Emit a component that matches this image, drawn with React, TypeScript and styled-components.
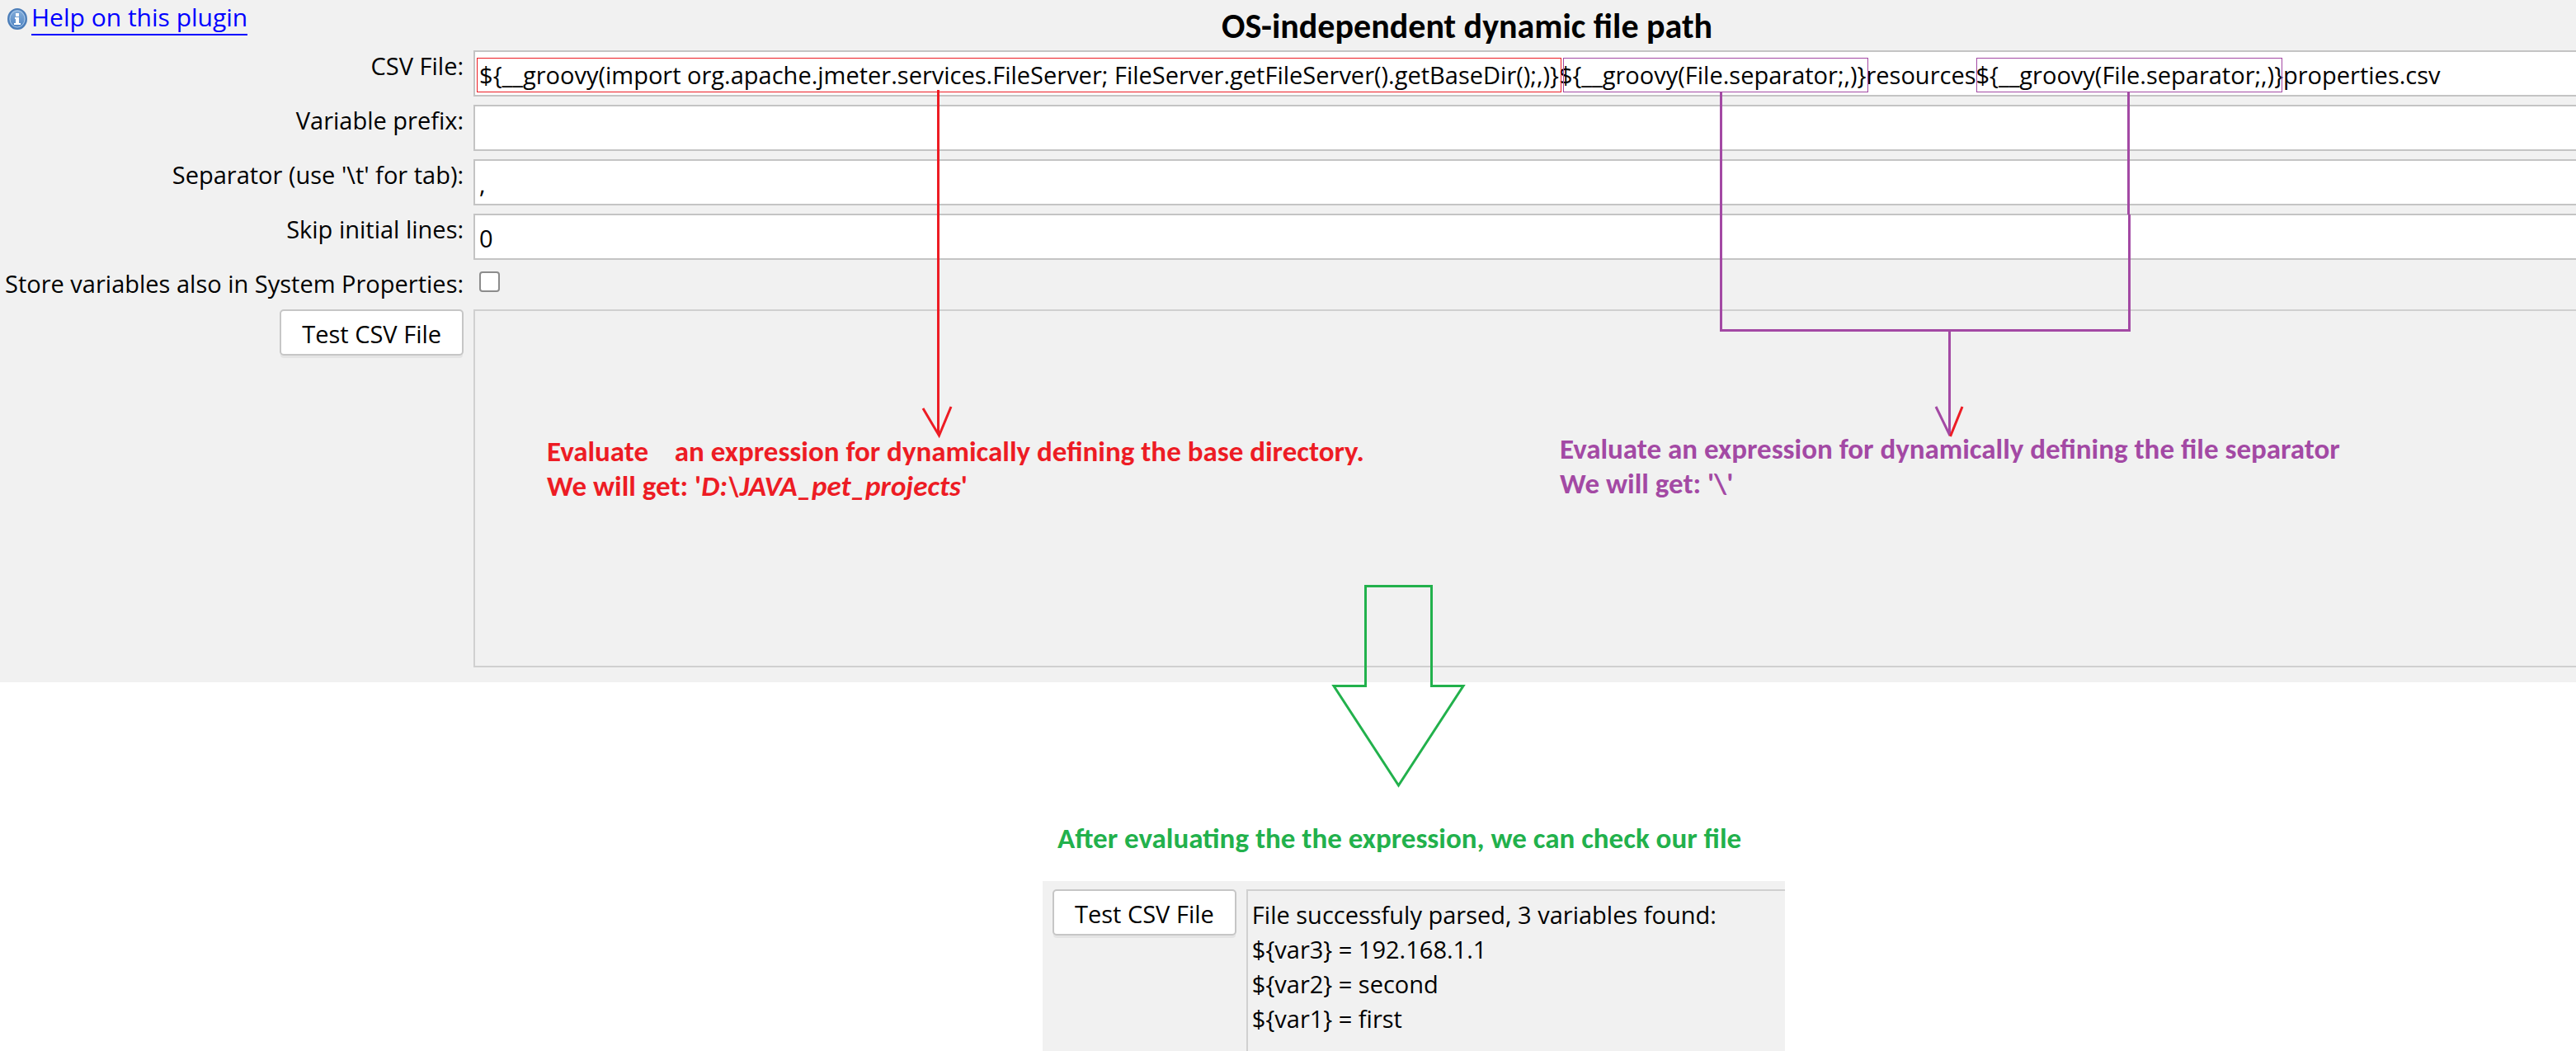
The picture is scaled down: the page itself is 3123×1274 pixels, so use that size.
import React from "react";
import styled, { createGlobalStyle } from "styled-components";

const RED = "#ed1c24";
const PURPLE = "#a349a4";
const GREEN = "#22b14c";
const UI_FONT = `"Segoe UI", "Open Sans", "Noto Sans", sans-serif`;
const NOTE_FONT = `Calibri, Carlito, Lato, sans-serif`;

const GlobalStyle = createGlobalStyle`
  *, *::before, *::after { box-sizing: border-box; }
  body { margin: 0; background: #fff; color: #000; font-family: ${UI_FONT}; font-size: 29px; }
`;

const Page = styled.div`
  position: relative;
  overflow: hidden;
`;

const Panel = styled.main`
  background: #f1f1f1;
  padding: 0 0 18px 6px;
`;

const HelpBar = styled.header`
  display: flex;
  align-items: flex-start;
  gap: 5px;
  height: 61px;
  padding-left: 3px;
`;

const HelpIcon = styled.svg`
  width: 24px;
  height: 26px;
  margin-top: 10px;
`;

const HelpLink = styled.a`
  color: #0000ff;
  font-size: 30px;
  line-height: 41px;
  text-decoration: none;
  border-bottom: 2px solid #0000ff;
`;

const Form = styled.form`
  display: grid;
  grid-template-columns: max-content 1fr;
  column-gap: 12px;
  row-gap: 10px;
  align-items: start;
`;

const Label = styled.label`
  justify-self: end;
  line-height: 38px;
`;

const Field = styled.input`
  width: 100%;
  height: 56px;
  border: 2px solid #c4c4c4;
  border-right: 0;
  border-radius: 0;
  outline: 0;
  background: #fff;
  padding: 2px 0 0 5px;
  font: inherit;
  color: inherit;
`;

const CheckCell = styled.div`
  display: flex;
  height: 40px;
  padding: 4px 0 0 7px;
`;

const Check = styled.input`
  appearance: none;
  width: 25px;
  height: 25px;
  margin: 0;
  border: 2px solid #8c8c8c;
  border-radius: 4px;
  background: #fff;
`;

const Button = styled.button`
  justify-self: end;
  flex: none;
  height: 56px;
  padding: 2px 25px 0;
  border: 2px solid #c6c6c6;
  border-radius: 5px;
  background: #fff;
  box-shadow: 0 4px 0 -1px #e4e4e4;
  font: inherit;
  color: inherit;
  white-space: nowrap;
`;

const Output = styled.textarea<{ $height: number; $cut?: boolean }>`
  display: block;
  width: 100%;
  height: ${(p) => p.$height}px;
  border: 2px solid #d0d0d0;
  border-right: 0;
  border-bottom-width: ${(p) => (p.$cut ? 0 : 2)}px;
  border-radius: 0;
  outline: 0;
  resize: none;
  overflow: hidden;
  background: transparent;
  padding: 8px 5px;
  font: inherit;
  line-height: 42px;
  color: inherit;
`;

const Result = styled.section`
  padding: 168px 0 0 1264px;
`;

const Caption = styled.h2`
  margin: 0 0 31px;
  padding-left: 18px;
  color: ${GREEN};
  font: bold 35px/42px ${NOTE_FONT};
`;

const ResultPanel = styled.div`
  display: flex;
  align-items: flex-start;
  gap: 12px;
  max-width: 900px;
  padding: 10px 0 0 12px;
  background: #f1f1f1;
`;

const Title = styled.h1`
  position: absolute;
  left: 1481px;
  top: 6px;
  margin: 0;
  font: bold 42px/52px ${NOTE_FONT};
  white-space: nowrap;
`;

const Note = styled.div<{ $x: number; $y: number; $color: string }>`
  position: absolute;
  left: ${(p) => p.$x}px;
  top: ${(p) => p.$y}px;
  color: ${(p) => p.$color};
  font: bold 35px/42px ${NOTE_FONT};
  white-space: pre;
`;

const NoteLine = styled.p`
  margin: 0;
`;

const Highlight = styled.span<{ $x: number; $width: number; $color: string }>`
  position: absolute;
  left: ${(p) => p.$x}px;
  top: 70px;
  width: ${(p) => p.$width}px;
  height: 42px;
  border: 1px solid ${(p) => p.$color};
  pointer-events: none;
`;

const Arrows = styled.svg`
  position: absolute;
  inset: 0;
  width: 100%;
  height: 100%;
  fill: none;
  stroke-width: 3;
  pointer-events: none;
`;

const CSV_PATH =
  "${__groovy(import org.apache.jmeter.services.FileServer; FileServer.getFileServer().getBaseDir();,)}" +
  "${__groovy(File.separator;,)}resources${__groovy(File.separator;,)}properties.csv";

const FIELDS = [
  { id: "csv-file", label: "CSV File:", value: CSV_PATH },
  { id: "prefix", label: "Variable prefix:", value: "" },
  { id: "separator", label: "Separator (use '\\t' for tab):", value: "," },
  { id: "skip", label: "Skip initial lines:", value: "0" },
];

const PARSED = [
  "File successfuly parsed, 3 variables found:",
  "${var3} = 192.168.1.1",
  "${var2} = second",
  "${var1} = first",
].join("\n");

function InfoIcon() {
  return (
    <HelpIcon viewBox="0 0 24 26" aria-hidden="true">
      <defs>
        <linearGradient id="info" x1="0" y1="0" x2="0" y2="1">
          <stop offset="0" stopColor="#86b0dc" />
          <stop offset="1" stopColor="#4a80c0" />
        </linearGradient>
      </defs>
      <ellipse cx="12" cy="13" rx="11" ry="12" fill="url(#info)" stroke="#4b7db8" strokeWidth="2" />
      <ellipse cx="12" cy="13" rx="9" ry="10" fill="none" stroke="#a9c8e8" strokeWidth="1" />
      <path d="M10 6h4v4h-4zM9 11h5v7h2v2H8v-2h2v-5H9z" fill="#fff" />
    </HelpIcon>
  );
}

export default function App() {
  return (
    <Page>
      <GlobalStyle />
      <Panel>
        <HelpBar>
          <InfoIcon />
          <HelpLink href="#help">Help on this plugin</HelpLink>
        </HelpBar>
        <Form onSubmit={(e) => e.preventDefault()}>
          {FIELDS.map((f) => (
            <React.Fragment key={f.id}>
              <Label htmlFor={f.id}>{f.label}</Label>
              <Field id={f.id} type="text" defaultValue={f.value} spellCheck={false} />
            </React.Fragment>
          ))}
          <Label htmlFor="store">Store variables also in System Properties:</Label>
          <CheckCell>
            <Check id="store" type="checkbox" />
          </CheckCell>
          <Button type="button">Test CSV File</Button>
          <Output $height={434} readOnly aria-label="Test output" />
        </Form>
      </Panel>

      <Result>
        <Caption>After evaluating the the expression, we can check our file</Caption>
        <ResultPanel>
          <Button type="button">Test CSV File</Button>
          <Output $height={196} $cut readOnly aria-label="Parsed variables" value={PARSED} />
        </ResultPanel>
      </Result>

      <Title>OS-independent dynamic file path</Title>
      <Highlight $x={578} $width={1315} $color={RED} />
      <Highlight $x={1895} $width={370} $color={PURPLE} />
      <Highlight $x={2396} $width={371} $color={PURPLE} />
      <Note $x={663} $y={526} $color={RED}>
        <NoteLine>{"Evaluate    an expression for dynamically defining the base directory."}</NoteLine>
        <NoteLine>
          We will get: '<em>D:\JAVA_pet_projects</em>'
        </NoteLine>
      </Note>
      <Note $x={1891} $y={523} $color={PURPLE}>
        <NoteLine>Evaluate an expression for dynamically defining the file separator</NoteLine>
        <NoteLine>{"We will get: '\\'"}</NoteLine>
      </Note>
      <Arrows aria-hidden="true">
        <path stroke={RED} d="M1137.5 109V526M1119 495L1138.500 528L1153 493" />
        <path
          stroke={PURPLE}
          d="M2086.500 112V400.500H2581.500V260M2580.500 112V260M2363.500 400V526M2347 493L2364 528"
        />
        <path stroke={RED} d="M2379 493L2364.500 529" />
        <path stroke={GREEN} d="M1655.500 831.500V710.500H1735.500V831.500H1774L1695.500 952L1617 831.500Z" />
      </Arrows>
    </Page>
  );
}
